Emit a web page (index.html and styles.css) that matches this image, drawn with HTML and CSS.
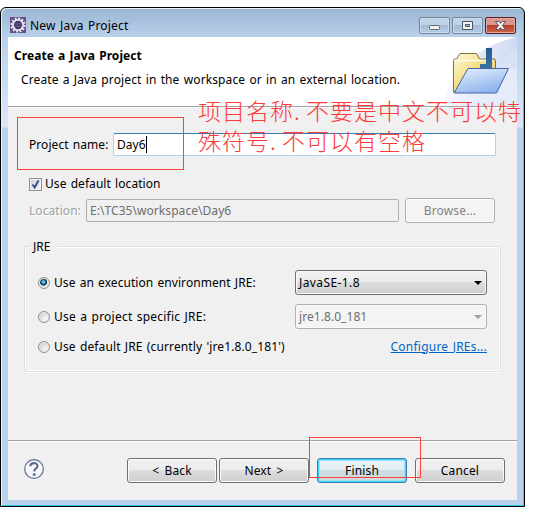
FILE: index.html
```html
<!DOCTYPE html>
<html lang="en">
<head>
<meta charset="utf-8">
<title>New Java Project</title>
<link rel="stylesheet" href="styles.css">
</head>
<body>
<div class="window">
  <header class="titlebar">
    <svg class="app-icon" width="16" height="16" viewBox="0 0 16 16">
      <rect width="16" height="16" fill="#66508c"/>
      <circle cx="8" cy="8" r="6.6" fill="none" stroke="#f4f2f6" stroke-width="2" stroke-dasharray="1.8 1.656"/>
      <circle cx="8" cy="8" r="5.1" fill="#423464" stroke="#e9e7ef" stroke-width="1.8"/>
      <path d="M4 6.5h8M3.8 8h8.4M4 9.5h8" stroke="#6f6690" stroke-width=".7"/>
    </svg>
    <span class="title"><span class="t">New Java Project</span></span>
    <div class="controls">
      <span class="ctl"><svg width="29" height="15" viewBox="0 0 29 15"><rect x="9.500" y="7.500" width="10" height="4" rx="1" fill="#f0f0ee" stroke="#62686e"/></svg></span>
      <span class="ctl max"><svg width="29" height="15" viewBox="0 0 29 15"><path fill-rule="evenodd" d="M9.500 3.500h10v8h-10zM12.500 6.500h4v2h-4z" fill="#f0f0ee" stroke="#4b5666"/></svg></span>
      <span class="ctl close"><svg width="29" height="15" viewBox="0 0 29 15"><path d="M9.500 3.500h3.200l1.800 2 1.800-2h3.200l-3.200 4 3.200 4h-3.200l-1.800-2-1.800 2h-3.200l3.200-4z" fill="#fff" stroke="#5b5566"/></svg></span>
    </div>
  </header>
  <main class="client">
    <section class="banner">
      <div class="banner-text">
        <h1><span class="t">Create a Java Project</span></h1>
        <p><span class="t">Create a Java project in the workspace or in an external location.</span></p>
      </div>
      <svg class="banner-art" width="75" height="69" viewBox="0 0 75 69">
        <defs>
          <linearGradient id="haze" x1="0" y1="0" x2="1" y2="0"><stop offset="0" stop-color="#f7f9fe"/><stop offset="1" stop-color="#cfdaf3"/></linearGradient>
          <linearGradient id="gold" x1="0" y1="0" x2="1" y2="1"><stop offset="0" stop-color="#fffbe0"/><stop offset=".45" stop-color="#f5de85"/><stop offset="1" stop-color="#e5c55d"/></linearGradient>
          <linearGradient id="flap" x1="0" y1="0" x2=".5" y2="1"><stop offset="0" stop-color="#e6f3ff"/><stop offset="1" stop-color="#8fb4ec"/></linearGradient>
          <linearGradient id="arrow" x1="0" y1="0" x2="0" y2="1"><stop offset="0" stop-color="#275a8d"/><stop offset="1" stop-color="#3c77a7"/></linearGradient>
        </defs>
        <path d="M75 0C40 8 8 30 1 69H75z" fill="url(#haze)"/>
        <path d="M75 10C60 22 50 45 46 69H75z" fill="#dce4f7" opacity=".7"/>
        <path d="M75 32C55 30 30 48 25 69H75z" fill="#edf1fc" opacity=".6"/>
        <path d="M11.500 55V23.500q0-1.500 1.500-1.500h1.500l3.500-5.500h16.500l3 5.500h14.500q1.500 0 1.500 1.500V55z" fill="url(#gold)" stroke="#80703e"/>
        <path d="M13 23.500h38" stroke="#fffbe8" stroke-width="1.500"/>
        <path d="M44 11h6v24H38v-8h6z" fill="url(#arrow)"/>
        <path d="M26 31.500h40.500L54.500 56H12z" fill="url(#flap)" stroke="#4564a2" stroke-linejoin="round"/>
      </svg>
    </section>
    <section class="form">
      <div class="row name-row">
        <label class="name-label"><span class="t">Project name:</span></label>
        <div class="field active"><span class="t">Day6</span><i class="caret"></i></div>
      </div>
      <div class="row check-row">
        <span class="checkbox"><svg width="11" height="11" viewBox="0 0 11 11"><path d="M2.500 5.500 4.700 8.500 8.500 1.500" fill="none" stroke="#3a4f94" stroke-width="2"/></svg></span>
        <span class="t">Use default location</span>
      </div>
      <div class="row loc-row">
        <label class="loc-label"><span class="t">Location:</span></label>
        <div class="field readonly"><span class="t">E:\TC35\workspace\Day6</span></div>
        <div class="btn disabled browse"><span class="t">Browse...</span></div>
      </div>
      <div class="group">
        <span class="legend"><span class="t">JRE</span></span>
        <div class="radio-row first">
          <i class="radio on"></i><span class="t">Use an execution environment JRE:</span>
          <div class="combo"><span class="t wide">JavaSE-1.8</span><i class="arrow"></i></div>
        </div>
        <div class="radio-row second">
          <i class="radio"></i><span class="t loose">Use a project specific JRE:</span>
          <div class="combo off"><span class="t">jre1.8.0_181</span><i class="arrow"></i></div>
        </div>
        <div class="radio-row third">
          <i class="radio"></i><span class="t">Use default JRE (currently 'jre1.8.0_181')</span>
          <a class="link"><span class="t">Configure JREs...</span></a>
        </div>
      </div>
    </section>
    <footer class="footer">
      <svg class="help" width="20" height="20" viewBox="0 0 20 20"><circle cx="10" cy="10" r="9.300" fill="#f7f8fb" stroke="#5c6d92" stroke-width="1.200"/><path d="M6.300 7.200C6.500 3.100 13.500 3.100 13.500 6.900 13.500 9.600 10.200 9.300 10.200 12.600" fill="none" stroke="#5c6d92" stroke-width="2.100"/><circle cx="10.200" cy="15.400" r="1.500" fill="#5c6d92"/></svg>
      <div class="btn back"><span class="t">&lt; Back</span></div>
      <div class="btn next"><span class="t">Next &gt;</span></div>
      <div class="btn default"><span class="t">Finish</span></div>
      <div class="btn cancel"><span class="t">Cancel</span></div>
    </footer>
  </main>
</div>
<div class="mark mark-name"></div>
<div class="mark mark-finish"></div>
<div class="note">项目名称<i>.</i>不要是中文不可以特<br>殊符号<i>.</i>不可以有空格</div>
</body>
</html>
```
FILE: styles.css
```css
* { box-sizing: border-box; }
body {
  margin: 0;
  padding-top: 7px;
  width: 536px;
  height: 511px;
  overflow: hidden;
  background: #fff;
  color: #000;
  font: 12px/16px "Noto Sans", "Open Sans", sans-serif;
}
.t { white-space: nowrap; word-spacing: 1px; letter-spacing: .06px; }
.window {
  width: 525px;
  height: 500px;
  padding: 0 6px 6px;
  border: 1px solid #000;
  border-radius: 6px 6px 0 0;
  background: linear-gradient(#9ab5d3, #b9d1ea 29px, #dae8f6 119px, #b9d1ea 120px);
  box-shadow: inset 1px 1px #e8f2fb, inset -1px -1px #35c8e8;
  padding-left: 7px;
}
.titlebar { display: flex; height: 29px; padding: 9px 2px 0; }
.app-icon { flex: none; margin-right: 4px; }
.title { flex: 1; line-height: 18px; }
.title .t { letter-spacing: .2px; }
.controls { display: flex; gap: 2px; }
.ctl {
  width: 31px;
  height: 17px;
  border: 1px solid #72869f;
  border-radius: 2px;
  background: linear-gradient(#c0d2e5 50%, #a3bbd5 50%, #b6cde6);
  box-shadow: inset 0 0 0 1px #ccdcec;
}
.ctl svg { display: block; }
.close { border-color: #581b24; background: linear-gradient(#d7978d 48%, #b83c27 48%, #cd6547); box-shadow: inset 0 0 0 1px #e1aaa2; }
.client { width: 509px; height: 463px; display: flex; flex-direction: column; background: #f0f0f0; }
.banner { height: 70px; display: flex; justify-content: space-between; background: #fff; border-bottom: 1px solid #a0a0a0; }
.banner-text { padding: 10px 0 0 6px; }
h1 { margin: 0; font-size: 12px; line-height: 18px; font-weight: 700; }
p { margin: 7px 0 0 7px; }
p .t { letter-spacing: .11px; }
.form { height: 334px; border-top: 1px solid #fff; border-bottom: 1px solid #a0a0a0; padding: 25px 16px 0 21px; }
.row { display: flex; align-items: center; }
.name-row { height: 23px; }
.name-label { width: 84px; }
.field { display: flex; align-items: center; height: 23px; padding: 0 4px; border: 1px solid #b5cfe7; border-radius: 2px; background: #fff; }
.active { width: 383px; padding-left: 3px; border-top-color: #3d7bad; }
.caret { width: 1px; height: 17px; background: #000; }
.check-row { height: 16px; margin-top: 20px; gap: 3px; }
.checkbox { width: 13px; height: 13px; border: 1px solid #8e8f8f; background: linear-gradient(135deg, #cbcfd5, #f6f6f6); box-shadow: inset 0 0 0 1px #f4f4f4; }
.checkbox svg { display: block; }
.loc-row { height: 25px; margin-top: 6px; }
.loc-label { width: 57px; color: #a0a0a0; text-shadow: 1px 1px #fff; }
.readonly { width: 313px; padding-left: 3px; border-color: #afafaf; background: #f0f0f0; color: #6d6d6d; }
.btn {
  display: flex;
  justify-content: center;
  align-items: center;
  width: 90px;
  height: 25px;
  border: 1px solid #707070;
  border-radius: 3px;
  background: linear-gradient(#f2f2f2, #ebebeb 49%, #dddddd 49%, #cfcfcf);
  box-shadow: inset 0 0 0 1px #fafafa;
}
.btn .t { letter-spacing: .15px; word-spacing: 2px; }
.disabled { border-color: #adb2b5; background: #f4f4f4; color: #838383; }
.browse { margin-left: 6px; }
.group { width: 477px; height: 126px; margin: 23px 0 0 -5px; border: 1px solid #d5dfe5; border-radius: 3px; box-shadow: inset 0 0 0 1px #fff, 0 1px #fff; padding: 0 13px; }
.legend { display: block; width: 26px; height: 16px; margin: -8px 0 0 -7px; padding-left: 2px; background: #f0f0f0; }
.radio-row { display: flex; align-items: center; height: 25px; }
.first { margin-top: 15px; }
.second { margin-top: 9px; }
.third { margin-top: 5px; }
.third > .t { letter-spacing: .12px; }
.radio-row .loose { letter-spacing: .22px; }
.radio { width: 12px; height: 12px; flex: none; margin-right: 4px; border: 1px solid #8e8f8f; border-radius: 50%; background: radial-gradient(circle at 65% 65%, #f5f5f5 10%, #cfd1d3 65%); box-shadow: inset 0 0 0 1px #f2f2f2; }
.on { background: radial-gradient(circle at 45% 40%, #5ed0ef 0 1px, #16729f 2px, #12304e 3.2px, #dfe4e8 4px); }
.combo { display: flex; align-items: center; justify-content: space-between; width: 192px; height: 25px; margin-left: auto; padding: 0 4px 0 3px; border: 1px solid #707070; border-radius: 3px; background: linear-gradient(#f2f2f2, #ebebeb 49%, #dddddd 49%, #cfcfcf); box-shadow: inset 0 0 0 1px #fafafa; }
.combo .wide { letter-spacing: .4px; }
.off { border-color: #adb2b5; background: #f4f4f4; color: #6d6d6d; }
.arrow { border: 4px solid transparent; border-top-color: #000; border-bottom: 0; }
.off .arrow { border-top-color: #a0a0a0; }
.link { margin-left: auto; color: #0066cc; text-decoration: underline; }
.link .t { letter-spacing: .22px; }
.footer { flex: 1; display: flex; align-items: flex-start; border-top: 1px solid #fff; padding: 16px 12px 0 16px; }
.help { margin: 1px 83px 0 0; }
.next { margin-left: 2px; }
.default { margin-left: 8px; border-color: #3c7fb1; background: linear-gradient(#edf4f7, #e2edf2 49%, #cbdde6 49%, #cfd8dc); box-shadow: inset 0 0 0 1px #43d0f5, inset 0 0 0 2px #9be3f7; }
.cancel { margin-left: 8px; }
.mark { position: absolute; border: 1px solid #f9423e; }
.mark-name { left: 17px; top: 117px; width: 167px; height: 53px; }
.mark-finish { left: 309px; top: 437px; width: 112px; height: 41px; }
.note { position: absolute; left: 198px; top: 95px; color: #fb3c3a; font: 300 23px/30px "Noto Sans CJK SC", sans-serif; letter-spacing: 1px; white-space: nowrap; }
.note i { display: inline-block; width: 12px; font-style: normal; }
```
